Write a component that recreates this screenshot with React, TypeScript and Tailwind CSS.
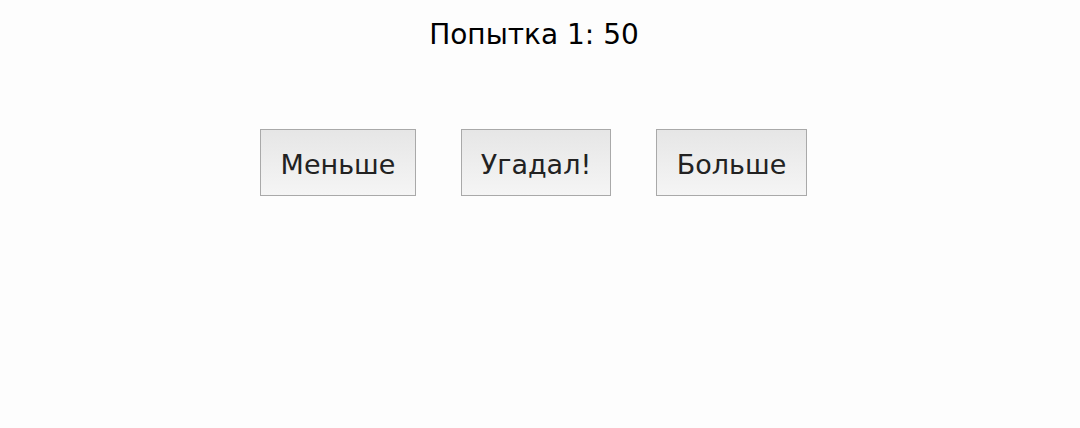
export default function App() {
  const btn =
    "h-[67px] border border-[#a9a9a9] bg-gradient-to-b from-[#e6e6e6] to-[#f5f5f5] pt-[3px] text-[27px] text-[#222] leading-none";
  return (
    <div className="w-full h-[428px] bg-[#fdfdfd]">
      <div
        className="w-[1068px] flex flex-col items-center"
        style={{ fontFamily: '"DejaVu Sans", Verdana, sans-serif' }}
      >
        <div className="mt-[17px] text-[28px] leading-[36px] text-black">Попытка 1: 50</div>
        <div className="mt-[76px] mr-[1px] flex gap-[45px]">
          <button className={btn + " w-[156px]"}>Меньше</button>
          <button className={btn + " w-[150px]"}>Угадал!</button>
          <button className={btn + " w-[151px]"}>Больше</button>
        </div>
      </div>
    </div>
  );
}
